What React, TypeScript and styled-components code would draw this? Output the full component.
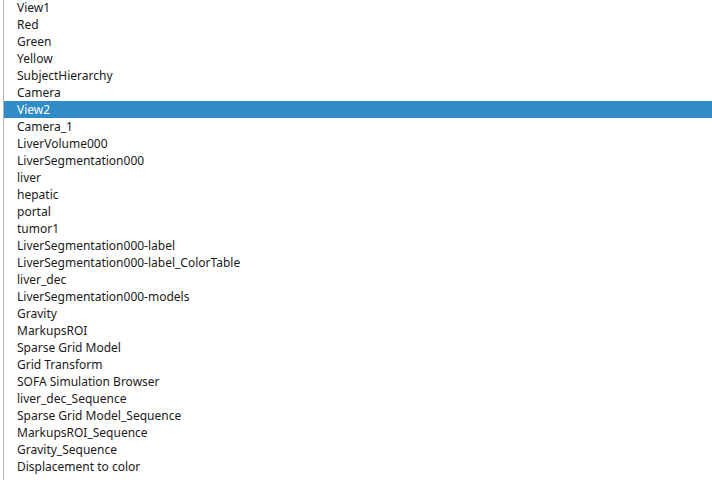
import React from "react";
import styled, { createGlobalStyle } from "styled-components";

const nodes = [
  "View1",
  "Red",
  "Green",
  "Yellow",
  "SubjectHierarchy",
  "Camera",
  "View2",
  "Camera_1",
  "LiverVolume000",
  "LiverSegmentation000",
  "liver",
  "hepatic",
  "portal",
  "tumor1",
  "LiverSegmentation000-label",
  "LiverSegmentation000-label_ColorTable",
  "liver_dec",
  "LiverSegmentation000-models",
  "Gravity",
  "MarkupsROI",
  "Sparse Grid Model",
  "Grid Transform",
  "SOFA Simulation Browser",
  "liver_dec_Sequence",
  "Sparse Grid Model_Sequence",
  "MarkupsROI_Sequence",
  "Gravity_Sequence",
  "Displacement to color",
];

const GlobalStyle = createGlobalStyle`
  html, body {
    margin: 0;
    padding: 0;
    background: #ffffff;
    overflow: hidden;
  }
`;

const Frame = styled.div`
  width: 708px;
  height: 481px;
  margin-left: 3px;
  margin-top: -1px;
  border-left: 1px solid #b4b4b4;
  background: #ffffff;
  overflow: hidden;
`;

const List = styled.ul`
  list-style: none;
  margin: 0;
  padding: 0;
`;

const Row = styled.li<{ selected?: boolean }>`
  height: 17px;
  line-height: 17px;
  padding-left: 13px;
  font-family: "Noto Sans", "Open Sans", sans-serif;
  font-size: 12px;
  white-space: nowrap;
  color: ${(p) => (p.selected ? "#ffffff" : "#1a1a1a")};
  background: ${(p) => (p.selected ? "#308cc6" : "transparent")};
`;

export default function App() {
  return (
    <>
      <GlobalStyle />
      <Frame>
        <List>
          {nodes.map((name) => (
            <Row key={name} selected={name === "View2"}>
              {name}
            </Row>
          ))}
        </List>
      </Frame>
    </>
  );
}
